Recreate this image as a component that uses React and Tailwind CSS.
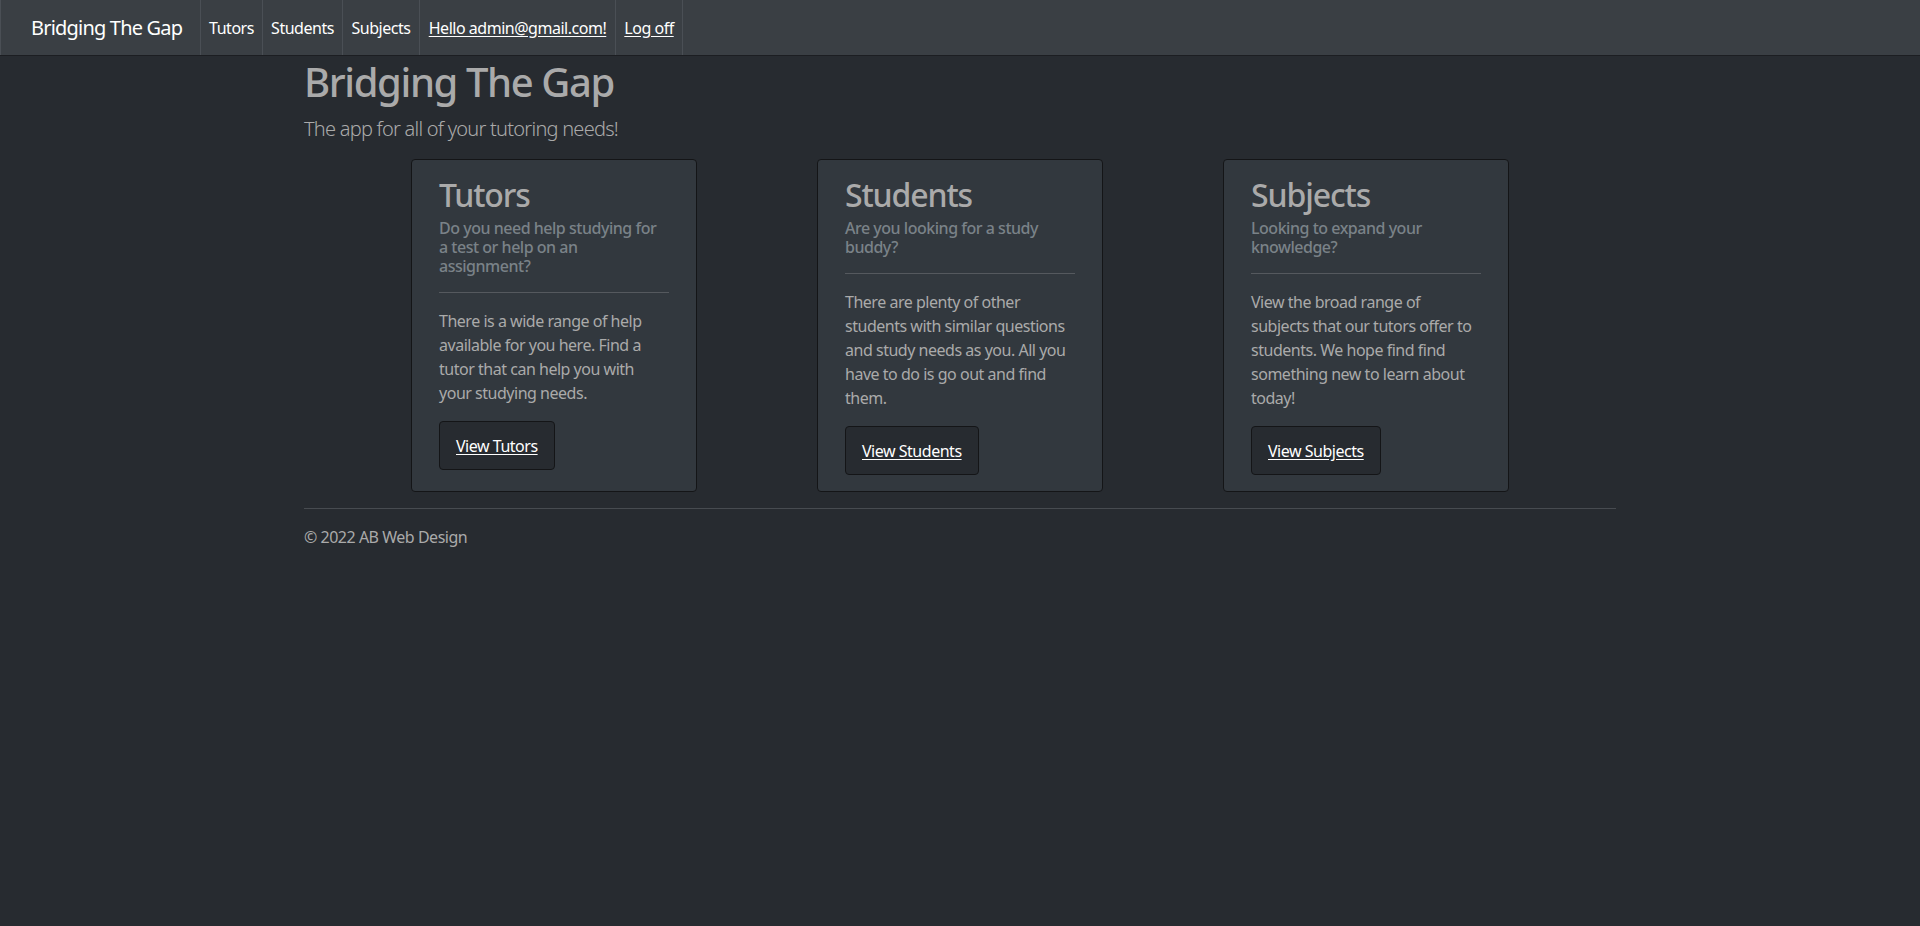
import React from "react";

const font = "font-['Noto_Sans','Open_Sans',sans-serif] tracking-[-0.03em]";

function NavItem({ children, w, underline, last }) {
  return (
    <div
      className={`flex h-full items-center justify-center border-l border-[#4a4f55] ${last ? "border-r" : ""} ${w}`}
    >
      <span className={`whitespace-nowrap text-[16px] text-white ${underline ? "underline underline-offset-2" : ""}`}>
        {children}
      </span>
    </div>
  );
}

function Card({ title, subtitle, body, button }) {
  return (
    <div className="flex w-[286px] flex-col items-start rounded border border-[#141517] bg-[#32383e] px-[27px] pb-[16px] pt-[16px]">
      <h2 className="text-[32px] font-medium leading-[38px] tracking-[-0.035em] text-[#aaaaaa]">{title}</h2>
      <h6 className="mt-[5px] whitespace-nowrap text-[16px] font-medium leading-[19px] text-[#7a8288]">{subtitle}</h6>
      <hr className="my-4 w-full border-0 border-t border-[#55595e]" />
      <p className="mb-4 whitespace-nowrap text-[16px] leading-6 text-[#aaaaaa]">{body}</p>
      <a className="flex h-[49px] items-center rounded border border-[#141517] bg-[#272b30] px-4 text-[16px] text-white underline underline-offset-2">
        {button}
      </a>
    </div>
  );
}

export default function App() {
  return (
    <div className={`min-h-screen bg-[#272b30] ${font}`}>
      <nav className="flex h-[56px] items-stretch border-b border-[#1c1e22] bg-[#3a3f44]">
        <div className="flex w-[200px] items-center border-l border-[#4a4f55] pl-[30px]">
          <span className="whitespace-nowrap text-[20px] tracking-[-0.04em] text-white">Bridging The Gap</span>
        </div>
        <NavItem w="w-[62px]">Tutors</NavItem>
        <NavItem w="w-[80px]">Students</NavItem>
        <NavItem w="w-[77px]">Subjects</NavItem>
        <NavItem w="w-[196px]" underline>Hello admin@gmail.com!</NavItem>
        <NavItem w="w-[68px]" underline last>Log off</NavItem>
      </nav>

      <main className="mx-auto w-[1312px]">
        <h1 className="mt-[2px] text-[40px] font-medium leading-[48px] tracking-[-0.035em] text-[#aaaaaa]">Bridging The Gap</h1>
        <p className="mt-2 text-[20px] font-light leading-[30px] tracking-[-0.038em] text-[#aaaaaa]">The app for all of your tutoring needs!</p>

        <div className="mt-[15px] flex justify-center gap-[120px]">
          <Card
            title="Tutors"
            subtitle={<>Do you need help studying for<br />a test or help on an<br />assignment?</>}
            body={<>There is a wide range of help<br />available for you here. Find a<br />tutor that can help you with<br />your studying needs.</>}
            button="View Tutors"
          />
          <Card
            title="Students"
            subtitle={<>Are you looking for a study<br />buddy?</>}
            body={<>There are plenty of other<br />students with similar questions<br />and study needs as you. All you<br />have to do is go out and find<br />them.</>}
            button="View Students"
          />
          <Card
            title="Subjects"
            subtitle={<>Looking to expand your<br />knowledge?</>}
            body={<>View the broad range of<br />subjects that our tutors offer to<br />students. We hope find find<br />something new to learn about<br />today!</>}
            button="View Subjects"
          />
        </div>

        <hr className="mt-4 border-0 border-t border-[#474b50]" />
        <footer className="mt-4 text-[16px] leading-6 text-[#aaaaaa]">© 2022 AB Web Design</footer>
      </main>
    </div>
  );
}
